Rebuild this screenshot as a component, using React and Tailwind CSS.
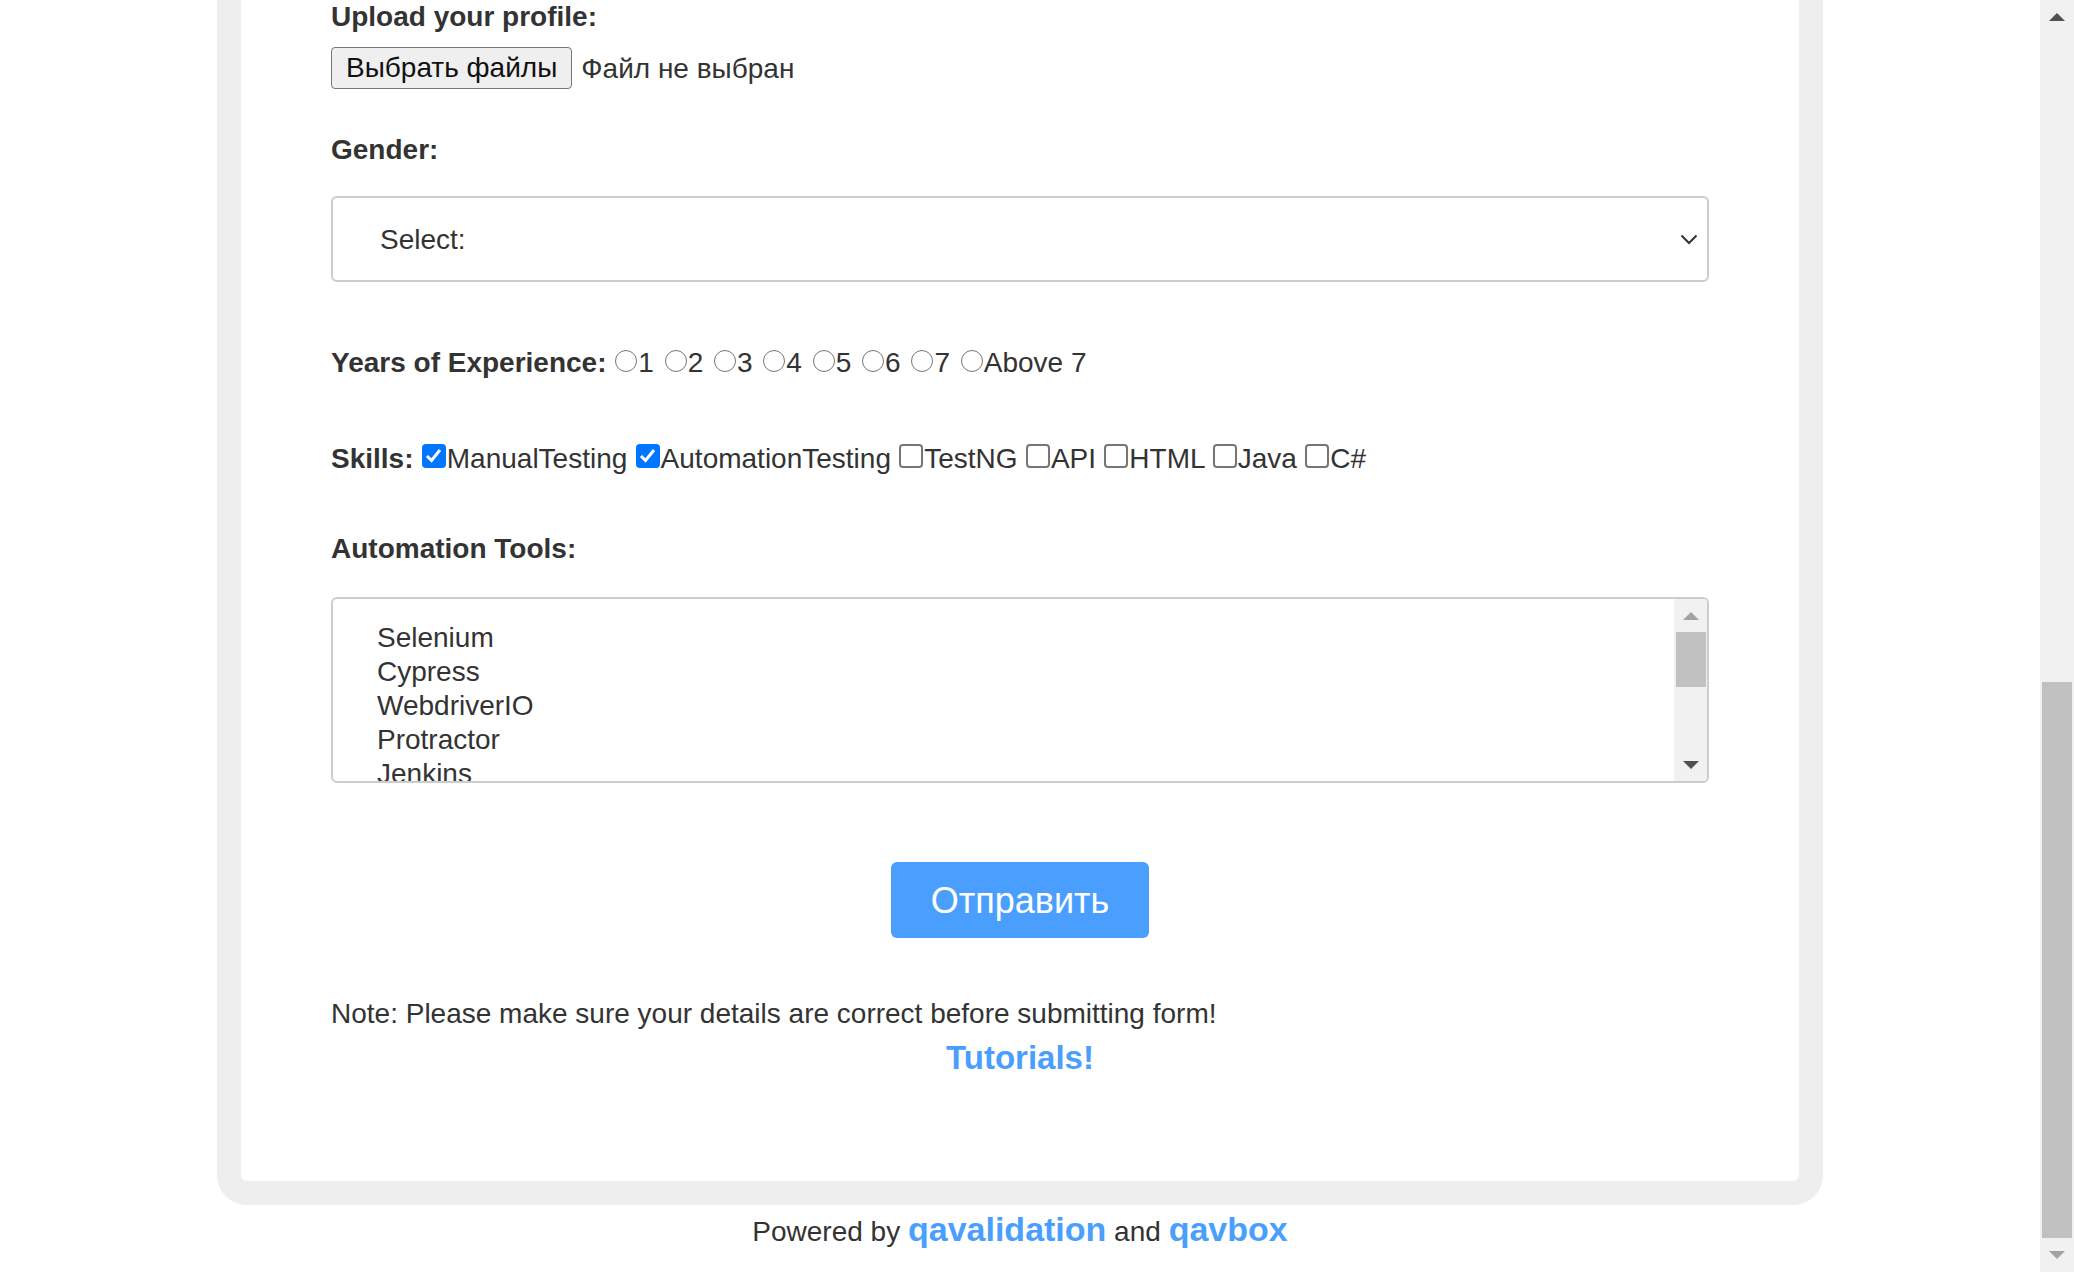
import React from 'react';

const years = ['1', '2', '3', '4', '5', '6', '7', 'Above 7'];

const skills = [
    { name: 'ManualTesting', checked: true },
    { name: 'AutomationTesting', checked: true },
    { name: 'TestNG', checked: false },
    { name: 'API', checked: false },
    { name: 'HTML', checked: false },
    { name: 'Java', checked: false },
    { name: 'C#', checked: false },
];

const tools = ['Selenium', 'Cypress', 'WebdriverIO', 'Protractor', 'Jenkins'];

function Arrow({ up, color }) {
    return (
        <svg width="16" height="8" viewBox="0 0 16 8">
            <polygon points={up ? '0,8 8,0 16,8' : '0,0 16,0 8,8'} fill={color} />
        </svg>
    );
}

function Radio({ first }) {
    return (
        <span
            className={
                (first ? 'ml-[1px] ' : 'ml-[3px] ') +
                'mr-[1px] inline-block h-[22px] w-[22px] rounded-full border-[1.5px] border-[#767676] bg-white'
            }
        />
    );
}

function Checkbox({ checked }) {
    if (checked) {
        return (
            <span className="ml-[0.5px] mr-[1px] inline-block h-[24px] w-[24px] rounded-[4px] bg-[#0075ff]">
                <svg className="mx-auto mt-[4px] block" width="17" height="15" viewBox="0 0 17 15">
                    <polyline points="2,8 6.5,12.5 15,2" fill="none" stroke="white" strokeWidth="3" />
                </svg>
            </span>
        );
    }
    return <span className="ml-[0.5px] mr-[1px] inline-block h-[24px] w-[24px] rounded-[4px] border-2 border-[#767676] bg-white" />;
}

export default function App() {
    return (
        <div className="flex h-[1272px] overflow-hidden bg-white font-['Liberation_Sans',Arial,sans-serif] text-[#333]">
            <div className="flex flex-1 flex-col items-center">
                {/* Grey frame around the form */}
                <div className="w-[1606px] rounded-b-[30px] bg-[#eeeeee] px-6 pb-6">
                    <div className="rounded-b-[6px] bg-white px-[90px] pb-[105px] pt-[1px] text-[28px] leading-[31px]">
                        <p className="font-bold">Upload your profile:</p>

                        <div className="mt-[15px] flex items-center">
                            <span className="h-[42px] rounded-[4px] border border-[#767676] bg-[#efefef] px-[14px] leading-[40px] text-[#111]">
                                Выбрать файлы
                            </span>
                            <span className="ml-[9px]">Файл не выбран</span>
                        </div>

                        <p className="mt-[45px] font-bold">Gender:</p>

                        <div className="mt-[31px] flex h-[86px] items-center justify-between rounded-[6px] border-2 border-[#cccccc] pl-[47px] pr-[9px]">
                            <span>Select:</span>
                            <svg width="18" height="11" viewBox="0 0 18 11">
                                <polyline points="1.5,1.5 9,9 16.5,1.5" fill="none" stroke="#333" strokeWidth="2" />
                            </svg>
                        </div>

                        {/* Years of experience */}
                        <p className="mt-[65px]">
                            <span className="font-bold">Years of Experience:</span>{' '}
                            {years.map((y, i) => (
                                <React.Fragment key={y}>
                                    <Radio first={i === 0} />
                                    {y}
                                    {i < years.length - 1 ? ' ' : ''}
                                </React.Fragment>
                            ))}
                        </p>

                        {/* Skills */}
                        <p className="mt-[65px]">
                            <span className="font-bold">Skills:</span>{' '}
                            {skills.map((s, i) => (
                                <React.Fragment key={s.name}>
                                    <Checkbox checked={s.checked} />
                                    {s.name}
                                    {i < skills.length - 1 ? ' ' : ''}
                                </React.Fragment>
                            ))}
                        </p>

                        <p className="mt-[59px] font-bold">Automation Tools:</p>

                        {/* Multi-select list */}
                        <div className="mt-[33px] flex h-[186px] overflow-hidden rounded-[6px] border-2 border-[#cccccc]">
                            <div className="flex-1 overflow-hidden pl-[44px] pt-[22px] leading-[34px]">
                                {tools.map((t) => (
                                    <div key={t}>{t}</div>
                                ))}
                            </div>
                            <div className="flex w-[33px] flex-col bg-[#f1f1f1]">
                                <div className="flex h-[33px] items-center justify-center">
                                    <Arrow up color="#a3a3a3" />
                                </div>
                                <div className="ml-[2px] mr-[1px] h-[55px] bg-[#c1c1c1]" />
                                <div className="flex-1" />
                                <div className="flex h-[33px] items-center justify-center">
                                    <Arrow color="#505050" />
                                </div>
                            </div>
                        </div>

                        <div className="mt-[79px] flex justify-center">
                            <button className="h-[76px] w-[258px] rounded-[6px] bg-[#4a9ffe] text-[36px] text-white">
                                Отправить
                            </button>
                        </div>

                        <p className="mt-[60px]">Note: Please make sure your details are correct before submitting form!</p>
                        <p className="mt-[10px] text-center text-[33px] font-bold leading-[37px] text-[#4a9ffe]">Tutorials!</p>
                    </div>
                </div>

                <p className="pt-[5px] text-center text-[28px] leading-[38px]">
                    Powered by <span className="text-[34px] font-bold text-[#4a9ffe]">qavalidation</span> and{' '}
                    <span className="text-[34px] font-bold text-[#4a9ffe]">qavbox</span>
                </p>
            </div>

            {/* Page scrollbar */}
            <div className="flex w-[34px] flex-col bg-[#f1f1f1]">
                <div className="flex h-[34px] items-center justify-center">
                    <Arrow up color="#505050" />
                </div>
                <div className="flex flex-1 flex-col justify-end">
                    <div className="mx-[2px] h-[556px] bg-[#c1c1c1]" />
                </div>
                <div className="flex h-[34px] items-center justify-center">
                    <Arrow color="#a3a3a3" />
                </div>
            </div>
        </div>
    );
}
